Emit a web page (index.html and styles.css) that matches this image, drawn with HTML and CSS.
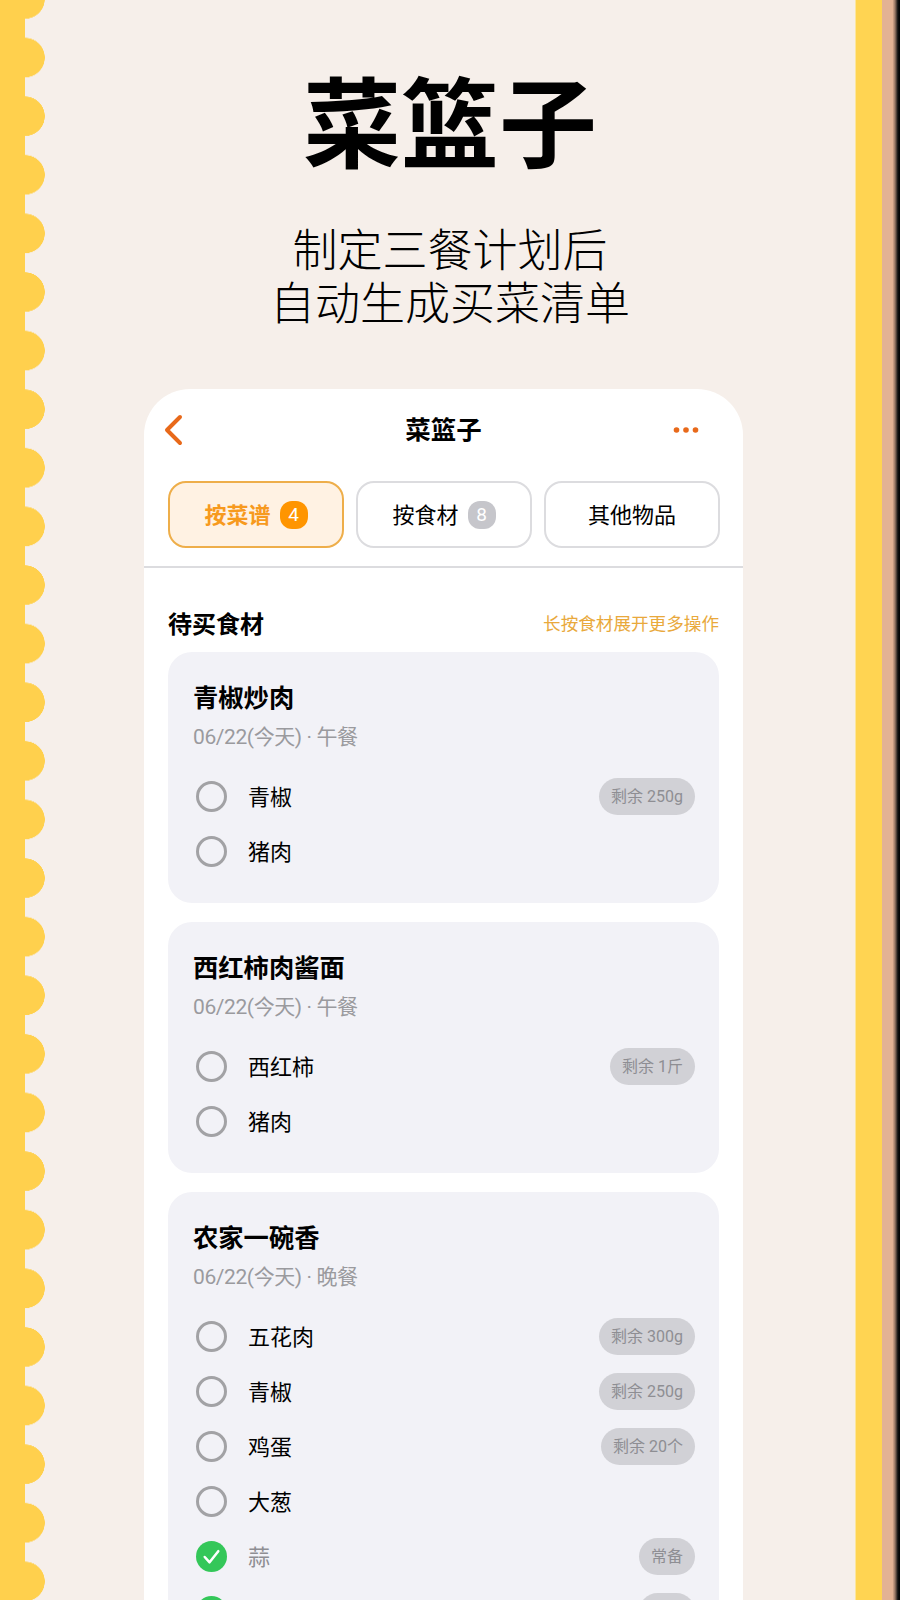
FILE: index.html
```html
<!DOCTYPE html>
<html lang="zh-CN">
<head>
    <meta charset="UTF-8">
    <title>菜篮子</title>
    <link rel="stylesheet" href="styles.css">
</head>
<body>
    <div class="page">
        <div class="scallop"></div>
        <div class="main">
            <h1 class="title">菜篮子</h1>
            <p class="subtitle">制定三餐计划后<br>自动生成买菜清单</p>
            <div class="phone">
                <div class="topbar">
                    <svg class="back" width="22" height="32" viewBox="0 0 22 32"><path d="M18 3 L5 16 L18 29" fill="none" stroke="#e8691a" stroke-width="4" stroke-linecap="round" stroke-linejoin="round"/></svg>
                    <span class="topbar-title">菜篮子</span>
                    <svg class="more" width="26" height="8" viewBox="0 0 26 8"><circle cx="3.5" cy="4" r="2.8" fill="#e8691a"/><circle cx="13" cy="4" r="2.8" fill="#e8691a"/><circle cx="22.5" cy="4" r="2.8" fill="#e8691a"/></svg>
                </div>
                <div class="tabs">
                    <div class="tab active">按菜谱 <span class="count">4</span></div>
                    <div class="tab">按食材 <span class="count">8</span></div>
                    <div class="tab">其他物品</div>
                </div>
                <div class="content">
                    <div class="section-head">
                        <span class="section-title">待买食材</span>
                        <span class="section-hint">长按食材展开更多操作</span>
                    </div>

                    <div class="card">
                        <div class="card-title">青椒炒肉</div>
                        <div class="card-meta">06/22(今天) · 午餐</div>
                        <div class="row"><span class="radio"></span><span class="name">青椒</span><span class="pill">剩余 250g</span></div>
                        <div class="row"><span class="radio"></span><span class="name">猪肉</span></div>
                    </div>

                    <div class="card">
                        <div class="card-title">西红柿肉酱面</div>
                        <div class="card-meta">06/22(今天) · 午餐</div>
                        <div class="row"><span class="radio"></span><span class="name">西红柿</span><span class="pill">剩余 1斤</span></div>
                        <div class="row"><span class="radio"></span><span class="name">猪肉</span></div>
                    </div>

                    <div class="card">
                        <div class="card-title">农家一碗香</div>
                        <div class="card-meta">06/22(今天) · 晚餐</div>
                        <div class="row"><span class="radio"></span><span class="name">五花肉</span><span class="pill">剩余 300g</span></div>
                        <div class="row"><span class="radio"></span><span class="name">青椒</span><span class="pill">剩余 250g</span></div>
                        <div class="row"><span class="radio"></span><span class="name">鸡蛋</span><span class="pill">剩余 20个</span></div>
                        <div class="row"><span class="radio"></span><span class="name">大葱</span></div>
                        <div class="row done">
                            <svg class="check" width="31" height="31" viewBox="0 0 32 32"><circle cx="16" cy="16" r="16" fill="#34c759"/><path d="M9 16.5 L14 22 L23 10.5" fill="none" stroke="#fff" stroke-width="2.6" stroke-linecap="round" stroke-linejoin="round"/></svg>
                            <span class="name">蒜</span><span class="pill">常备</span>
                        </div>
                        <!-- this row runs off the bottom of the window -->
                        <div class="row done">
                            <svg class="check" width="31" height="31" viewBox="0 0 32 32"><circle cx="16" cy="16" r="16" fill="#34c759"/></svg>
                            <span class="name"></span><span class="pill pill-blank"></span>
                        </div>
                    </div>
                </div>
            </div>
        </div>
        <div class="stripe"></div>
        <div class="edge"></div>
    </div>
</body>
</html>
```

FILE: styles.css
```css
* {
    box-sizing: border-box;
}
html, body {
    margin: 0;
    padding: 0;
}
body {
    font-family: Roboto, "Noto Sans CJK SC", sans-serif;
    color: #000;
}
.page {
    display: flex;
    width: 900px;
    height: 1600px;
    overflow: hidden;
    background: #f6efea;
}
.scallop {
    flex: 0 0 45px;
    background-color: transparent;
    background-image:
        linear-gradient(#ffd04d, #ffd04d),
        radial-gradient(circle at 25px 29px, #ffd04d 19.5px, transparent 20px);
    background-size: 25px 100%, 45px 58.62px;
    background-repeat: no-repeat, repeat-y;
    background-position: 0 0, 0 -30px;
}
.main {
    flex: 1;
    min-width: 0;
}
.stripe {
    flex: 0 0 27px;
    background: #ffd452;
    border-left: 1px solid #fbe6a0;
}
.edge {
    flex: 0 0 18px;
    background: linear-gradient(90deg, #e3b294 0, #e3b294 58%, #9a7865 72%, #111 88%, #000 100%);
}
.title {
    margin: 0;
    padding-top: 66px;
    font-size: 98px;
    line-height: 122px;
    font-weight: 700;
    text-align: center;
}
.subtitle {
    margin: 37px 0 0;
    font-size: 45px;
    line-height: 53px;
    font-weight: 300;
    text-align: center;
}
.phone {
    width: 599px;
    margin: 58px 0 0 99px;
    background: #fff;
    border-radius: 46px 46px 0 0;
}
.topbar {
    display: flex;
    align-items: center;
    justify-content: space-between;
    height: 84px;
    padding: 0 44px 2px 18px;
}
.topbar-title {
    font-size: 25.5px;
    font-weight: 700;
    margin: 0 0 6px 30px;
}
.tabs {
    display: flex;
    gap: 12px;
    padding: 8px 23px 18px 24px;
    border-bottom: 2px solid #dcdcdf;
}
.tab {
    flex: 1;
    display: flex;
    align-items: center;
    justify-content: center;
    gap: 9px;
    height: 67px;
    padding-bottom: 4px;
    border: 2px solid #dcdcdf;
    border-radius: 18px;
    font-size: 22px;
}
.tab.active {
    background: #fff2e3;
    border-color: #eeae4a;
    color: #f79a1e;
    font-weight: 700;
}
.count {
    display: flex;
    align-items: center;
    justify-content: center;
    width: 28px;
    height: 28px;
    margin-top: 4px;
    border-radius: 12px;
    background: #c6c6cb;
    color: #fff;
    font-size: 19px;
    font-weight: 400;
}
.active .count {
    background: #ff9500;
}
.content {
    padding: 36px 24px 0;
}
.section-head {
    display: flex;
    align-items: center;
    justify-content: space-between;
    height: 36px;
    margin-bottom: 12px;
}
.section-title {
    font-size: 24px;
    font-weight: 700;
}
.section-hint {
    font-size: 17.6px;
    color: #e9a93c;
}
.card {
    padding: 29px 24px 24px 25px;
    margin-bottom: 19px;
    background: #f2f2f7;
    border-radius: 24px;
}
.card-title {
    font-size: 25.3px;
    line-height: 36px;
    font-weight: 700;
}
.card-meta {
    margin: 4px 0 16px;
    font-size: 21px;
    line-height: 32px;
    letter-spacing: -0.4px;
    color: #9a9a9e;
}
.row {
    display: flex;
    align-items: center;
    height: 55px;
}
.radio {
    flex: none;
    width: 31px;
    height: 31px;
    margin-left: 3px;
    border: 3px solid #a2a2a5;
    border-radius: 50%;
}
.check {
    flex: none;
    margin-left: 3px;
}
.name {
    flex: 1;
    margin-left: 21px;
    padding-bottom: 4px;
    font-size: 22px;
}
.done .name {
    color: #8e8e93;
}
.pill {
    padding: 0 12px;
    height: 37px;
    line-height: 37px;
    border-radius: 19px;
    background: #d1d1d6;
    color: #8e8e93;
    font-size: 16px;
}
.pill-blank {
    width: 56px;
}
```
